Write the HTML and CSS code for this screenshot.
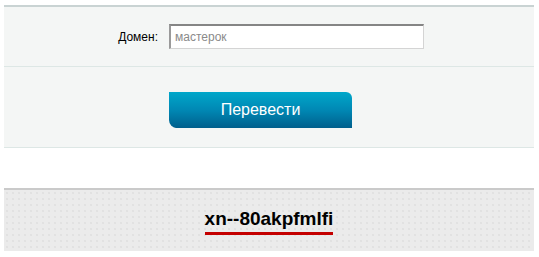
FILE: index.html
```html
<!DOCTYPE html>
<html lang="ru">
<head>
  <meta charset="UTF-8" />
  <meta name="viewport" content="width=device-width, initial-scale=1" />
  <title>Конвертер доменов</title>
  <link rel="stylesheet" href="styles.css">
</head>
<body>
  <div class="wrap">
    <form class="panel" onsubmit="return false;">
      <div class="row-field">
        <label class="label" for="domain">Домен:</label>
        <input class="field" id="domain" type="text" value="мастерок">
      </div>
      <div class="row-button">
        <button class="btn" type="submit">Перевести</button>
      </div>
    </form>

    <div class="result">
      <span class="result-text">xn--80akpfmlfi</span>
    </div>
  </div>
</body>
</html>
```

FILE: styles.css
```css
body {
  margin: 0;
  background: #fff;
  font-family: "Liberation Sans", Arial, sans-serif;
}

.wrap {
  width: 530px;
  margin: 5px 0 0 4px;
}

.panel {
  margin: 0;
  background: #f4f6f5;
  border-top: 2px solid #c9d3d3;
  border-bottom: 1px solid #dde7e5;
}

.row-field {
  display: flex;
  align-items: center;
  height: 59px;
  border-bottom: 1px solid #dde7e5;
}

.label {
  width: 154px;
  text-align: right;
  font-size: 12px;
  color: #000;
  margin-right: 11px;
}

.field {
  box-sizing: border-box;
  width: 255px;
  height: 25px;
  margin: 0;
  padding: 0 4px;
  font-family: "Liberation Sans", Arial, sans-serif;
  font-size: 12px;
  color: #8a8a8a;
  background: #fff;
  border: 1px solid #d4d4d4;
  border-top: 2px solid #858585;
  border-left: 2px solid #9a9a9a;
  outline: none;
}

.row-button {
  padding: 25px 0 19px 165px;
}

.btn {
  display: block;
  width: 183px;
  height: 36px;
  padding: 0;
  font-family: "Liberation Sans", Arial, sans-serif;
  font-size: 16px;
  color: #fff;
  border: 0;
  border-radius: 0 6px 0 8px;
  background: linear-gradient(#00a7ca, #0088b4 50%, #005f8c);
  cursor: pointer;
}

.result {
  margin-top: 40px;
  height: 61px;
  border-top: 2px solid #cacaca;
  background-color: #ebebeb;
  background-image: radial-gradient(#e1e1e1 0.7px, transparent 1px);
  background-size: 6px 6px;
  display: flex;
  justify-content: center;
  align-items: flex-start;
}

.result-text {
  margin-top: 18px;
  padding-bottom: 2px;
  font-size: 19px;
  font-weight: bold;
  color: #000;
  border-bottom: 3px solid #c40000;
}
```
